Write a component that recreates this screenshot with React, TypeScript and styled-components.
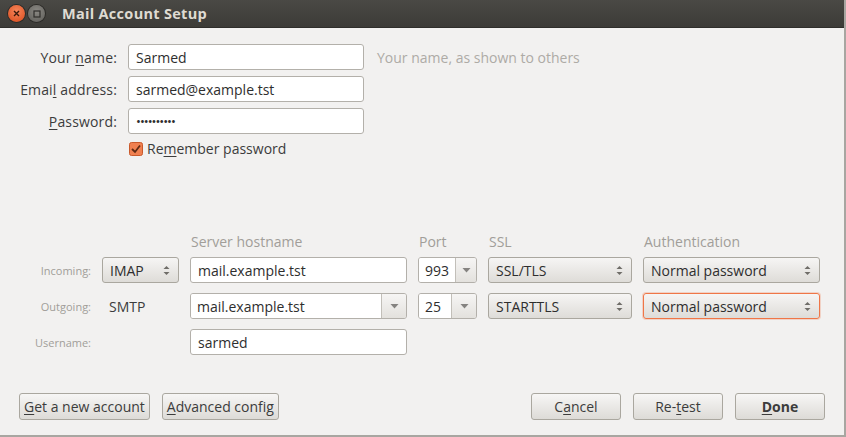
import React from 'react';
import styled, { createGlobalStyle } from 'styled-components';

const Global = createGlobalStyle`
  html, body { margin: 0; padding: 0; background: #f2f1f0; }
  body { font-family: "Open Sans", "Noto Sans", sans-serif; font-size: 14px; color: #3c3c3c; }
  u { text-decoration: underline; text-underline-offset: 2px; }
`;

const Window = styled.div`
  width: 846px;
  height: 437px;
  box-sizing: border-box;
  display: flex;
  flex-direction: column;
  background: #f2f1f0;
  border-right: 2px solid #a8a6a1;
  border-bottom: 2px solid #a8a6a1;
  overflow: hidden;
`;

const TitleBar = styled.div`
  height: 27px;
  flex: none;
  display: flex;
  align-items: center;
  padding-left: 8px;
  background: linear-gradient(#4a4945, #3c3b37);
  border-bottom: 1px solid #2f2e2b;
`;

const WinBtn = styled.div<{ $close?: boolean }>`
  width: 17px;
  height: 17px;
  border-radius: 50%;
  margin-right: 3px;
  display: flex;
  align-items: center;
  justify-content: center;
  background: ${(p) =>
    p.$close
      ? 'radial-gradient(circle at 50% 35%, #f7855a, #d84a1b)'
      : 'radial-gradient(circle at 50% 35%, #8a8883, #5d5c58)'};
  box-shadow: 0 0 0 1px #2c2b28;
`;

const Title = styled.div`
  margin-left: 14px;
  font-weight: 700;
  font-size: 14.5px;
  color: #dfdbd2;
  letter-spacing: 0.3px;
`;

const Body = styled.div`
  flex: 1;
  display: flex;
  flex-direction: column;
  padding-top: 16px;
`;

const IdentityGrid = styled.div`
  display: grid;
  grid-template-columns: 117px 236px auto;
  column-gap: 11px;
  row-gap: 6px;
  align-items: center;
`;

const Label = styled.label`
  text-align: right;
  color: #3c3c3c;
  white-space: nowrap;
  letter-spacing: 0.15px;
`;

const Input = styled.div<{ $w?: number }>`
  height: 26px;
  box-sizing: border-box;
  ${(p) => (p.$w ? `width: ${p.$w}px;` : '')}
  display: flex;
  align-items: center;
  padding: 0 7px;
  background: #fff;
  border: 1px solid #b3b0aa;
  border-radius: 3px;
  color: #2e2e2e;
  white-space: nowrap;
  overflow: hidden;
`;

const Dots = styled(Input)`
  font-size: 13px;
  letter-spacing: -1px;
`;

const Hint = styled.span`
  margin-left: 2px;
  color: #aeaba6;
`;

const CheckRow = styled.div`
  grid-column: 2 / 4;
  display: flex;
  align-items: center;
  gap: 4px;
  margin-top: -1px;
  margin-left: 1px;
`;

const ServerGrid = styled.div`
  margin-top: 74px;
  display: grid;
  grid-template-columns: 91px 77px 217px 59px 144px 177px;
  column-gap: 11px;
  row-gap: 10px;
  align-items: center;
`;

const ColHead = styled.div<{ $col: number }>`
  grid-column: ${(p) => p.$col};
  color: #a19e99;
  margin-bottom: -4px;
  margin-left: 1px;
`;

const SmallLabel = styled.div`
  text-align: right;
  font-size: 11px;
  color: #a19e99;
`;

const Plain = styled.div`
  padding-left: 7px;
  color: #3c3c3c;
`;

const Select = styled.div<{ $focus?: boolean }>`
  height: 26px;
  box-sizing: border-box;
  display: flex;
  align-items: center;
  justify-content: space-between;
  padding: 0 8px 0 7px;
  background: linear-gradient(#f6f5f4, #dedcd8);
  border: 1px solid ${(p) => (p.$focus ? '#ef7647' : '#aaa79f')};
  box-shadow: ${(p) => (p.$focus ? '0 0 0 1px rgba(239,118,71,0.25)' : 'none')};
  border-radius: 3px;
  color: #2e2e2e;
  white-space: nowrap;
`;

const Combo = styled.div`
  height: 26px;
  box-sizing: border-box;
  display: flex;
  border: 1px solid #b3b0aa;
  border-radius: 3px;
  overflow: hidden;
`;

const ComboEntry = styled.div`
  flex: 1;
  display: flex;
  align-items: center;
  padding: 0 6px;
  background: #fff;
  color: #2e2e2e;
  border-right: 1px solid #c2bfb9;
`;

const ComboButton = styled.div`
  width: 24px;
  display: flex;
  align-items: center;
  justify-content: center;
  background: linear-gradient(#f6f5f4, #e3e1dd);
`;

const ButtonBar = styled.div`
  margin-top: auto;
  margin-bottom: 15px;
  display: flex;
  align-items: center;
  padding: 0 19px;
  gap: 12px;
`;

const Spacer = styled.div`
  flex: 1;
`;

const Button = styled.button<{ $w?: number; $bold?: boolean }>`
  height: 27px;
  ${(p) => (p.$w ? `width: ${p.$w}px;` : 'padding: 0 4px;')}
  font-family: inherit;
  font-size: 14px;
  font-weight: ${(p) => (p.$bold ? 700 : 400)};
  color: #3c3c3c;
  background: linear-gradient(#f7f6f5, #dddbd7);
  border: 1px solid #aaa79f;
  border-radius: 3px;
  cursor: default;
`;

const UpDown = () => (
  <svg width="7" height="11" viewBox="0 0 7 11">
    <path d="M3.5 1 L6.5 4 L0.5 4 Z" fill="#6f6d68" />
    <path d="M3.5 10 L6.5 7 L0.5 7 Z" fill="#6f6d68" />
  </svg>
);

const Down = () => (
  <svg width="9" height="6" viewBox="0 0 9 6">
    <path d="M0.5 1 L8.5 1 L4.5 5.5 Z" fill="#858380" />
  </svg>
);

const CheckBox = () => (
  <svg width="14" height="14" viewBox="0 0 14 14">
    <rect x="0.5" y="0.5" width="13" height="13" rx="2" fill="#f08050" stroke="#c9592b" />
    <path d="M3 7 L6 10 L11 3.5" fill="none" stroke="#5e2a14" strokeWidth="1.8" />
  </svg>
);

export default function App() {
  return (
    <>
      <Global />
      <Window>
        <TitleBar>
          <WinBtn $close>
            <svg width="7" height="7" viewBox="0 0 7 7">
              <path d="M1 1 L6 6 M6 1 L1 6" stroke="#3a1a0c" strokeWidth="1.4" />
            </svg>
          </WinBtn>
          <WinBtn>
            <svg width="8" height="8" viewBox="0 0 8 8">
              <rect x="1" y="1" width="6" height="6" fill="none" stroke="#2f2e2b" strokeWidth="1.2" />
            </svg>
          </WinBtn>
          <Title>Mail Account Setup</Title>
        </TitleBar>
        <Body>
          <IdentityGrid>
            <Label>Your <u>n</u>ame:</Label>
            <Input>Sarmed</Input>
            <Hint>Your name, as shown to others</Hint>
            <Label>Emai<u>l</u> address:</Label>
            <Input>sarmed@example.tst</Input>
            <span />
            <Label><u>P</u>assword:</Label>
            <Dots>••••••••••</Dots>
            <span />
            <span />
            <CheckRow>
              <CheckBox />
              <span>Re<u>m</u>ember password</span>
            </CheckRow>
          </IdentityGrid>

          <ServerGrid>
            <ColHead $col={3}>Server hostname</ColHead>
            <ColHead $col={4}>Port</ColHead>
            <ColHead $col={5}>SSL</ColHead>
            <ColHead $col={6}>Authentication</ColHead>

            <SmallLabel>Incoming:</SmallLabel>
            <Select>IMAP<UpDown /></Select>
            <Input>mail.example.tst</Input>
            <Combo>
              <ComboEntry>993</ComboEntry>
              <ComboButton><Down /></ComboButton>
            </Combo>
            <Select>SSL/TLS<UpDown /></Select>
            <Select>Normal password<UpDown /></Select>

            <SmallLabel>Outgoing:</SmallLabel>
            <Plain>SMTP</Plain>
            <Combo>
              <ComboEntry>mail.example.tst</ComboEntry>
              <ComboButton><Down /></ComboButton>
            </Combo>
            <Combo>
              <ComboEntry>25</ComboEntry>
              <ComboButton><Down /></ComboButton>
            </Combo>
            <Select>STARTTLS<UpDown /></Select>
            <Select $focus>Normal password<UpDown /></Select>

            <SmallLabel>Username:</SmallLabel>
            <span />
            <Input>sarmed</Input>
          </ServerGrid>

          <ButtonBar>
            <Button><u>G</u>et a new account</Button>
            <Button><u>A</u>dvanced config</Button>
            <Spacer />
            <Button $w={90}>C<u>a</u>ncel</Button>
            <Button $w={90}>Re-<u>t</u>est</Button>
            <Button $w={90} $bold><u>D</u>one</Button>
          </ButtonBar>
        </Body>
      </Window>
    </>
  );
}
